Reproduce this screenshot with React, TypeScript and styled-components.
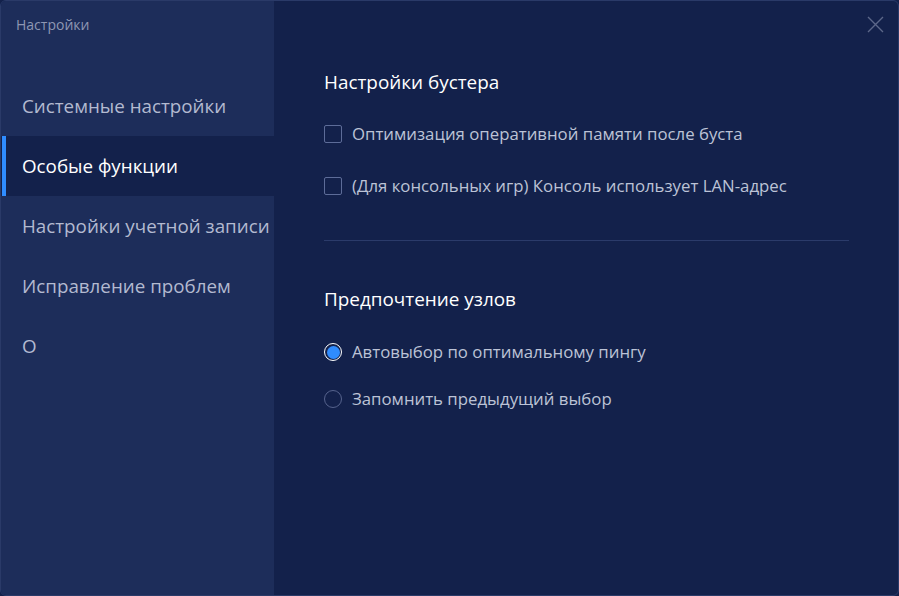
import React, { useState } from 'react';
import styled, { createGlobalStyle } from 'styled-components';

const GlobalStyle = createGlobalStyle`
	html, body {
		margin: 0;
		padding: 0;
		background: #13214b;
	}
	body {
		font-family: "Open Sans", "Noto Sans", sans-serif;
	}
`;

const Window = styled.div`
	width: 899px;
	height: 596px;
	box-sizing: border-box;
	display: flex;
	background: #13214b;
	border: 1px solid #2a3a68;
	border-radius: 6px;
	overflow: hidden;
	position: relative;
`;

const Sidebar = styled.aside`
	width: 273px;
	flex-shrink: 0;
	background: #1d2d5a;
	display: flex;
	flex-direction: column;
`;

const WindowTitle = styled.div`
	font-size: 14px;
	color: #8e97b3;
	padding: 14px 0 0 15px;
	height: 75px;
	box-sizing: border-box;
`;

const NavItem = styled.div<{ active?: boolean }>`
	height: 60px;
	display: flex;
	align-items: center;
	padding-left: 21px;
	font-size: 18.8px;
	white-space: nowrap;
	color: ${({ active }) => active ? '#ffffff' : '#b3bad0'};
	background: ${({ active }) => active ? '#13214b' : 'transparent'};
	position: relative;
	cursor: pointer;

	&::before {
		content: "";
		display: ${({ active }) => active ? 'block' : 'none'};
		position: absolute;
		left: 1px;
		top: 0;
		bottom: 0;
		width: 4px;
		background: #2f8cff;
	}
`;

const Content = styled.main`
	flex: 1;
	padding: 66px 50px 0 50px;
	display: flex;
	flex-direction: column;
`;

const SectionTitle = styled.h2`
	margin: 0;
	font-size: 18.9px;
	font-weight: 400;
	color: #ffffff;
	line-height: 30px;
`;

const OptionList = styled.div<{ gap: number; top: number }>`
	display: flex;
	flex-direction: column;
	gap: ${({ gap }) => gap}px;
	margin-top: ${({ top }) => top}px;
`;

const Option = styled.label`
	display: flex;
	align-items: center;
	gap: 10px;
	font-size: 16.8px;
	color: #bcc3d6;
	line-height: 24px;
	white-space: nowrap;
	cursor: pointer;
`;

const CheckBox = styled.span<{ checked?: boolean }>`
	width: 16px;
	height: 16px;
	border: 1.5px solid #5d6c98;
	border-radius: 2px;
	flex-shrink: 0;
	background: ${({ checked }) => checked ? '#2f8cff' : 'transparent'};
`;

const Radio = styled.span<{ checked?: boolean }>`
	width: 16px;
	height: 16px;
	border-radius: 50%;
	flex-shrink: 0;
	border: 1.5px solid ${({ checked }) => checked ? '#ffffff' : '#56638d'};
	position: relative;

	&::after {
		content: "";
		display: ${({ checked }) => checked ? 'block' : 'none'};
		position: absolute;
		inset: 1.5px;
		border-radius: 50%;
		background: #2f8cff;
	}
`;

const Divider = styled.hr`
	border: none;
	height: 1px;
	background: #2b3b6a;
	margin: 42px 0 0 0;
	width: 525px;
`;

const SecondSection = styled.section`
	margin-top: 43px;
`;

const CloseButton = styled.button`
	position: absolute;
	top: 13px;
	right: 13px;
	width: 20px;
	height: 20px;
	padding: 0;
	border: none;
	background: transparent;
	cursor: pointer;
	display: flex;
	align-items: center;
	justify-content: center;
`;

const navItems = [
	'Системные настройки',
	'Особые функции',
	'Настройки учетной записи',
	'Исправление проблем',
	'О',
];

export default function App() {
	const [active, setActive] = useState(1);
	const [ram, setRam] = useState(false);
	const [lan, setLan] = useState(false);
	const [node, setNode] = useState(0);

	return (
		<>
			<GlobalStyle />
			<Window>
				<Sidebar>
					<WindowTitle>Настройки</WindowTitle>
					{navItems.map((item, i) => (
						<NavItem key={item} active={i === active} onClick={() => setActive(i)}>
							{item}
						</NavItem>
					))}
				</Sidebar>
				<Content>
					<section>
						<SectionTitle>Настройки бустера</SectionTitle>
						<OptionList gap={28} top={25}>
							<Option onClick={() => setRam(!ram)}>
								<CheckBox checked={ram} />
								Оптимизация оперативной памяти после буста
							</Option>
							<Option onClick={() => setLan(!lan)}>
								<CheckBox checked={lan} />
								(Для консольных игр) Консоль использует LAN-адрес
							</Option>
						</OptionList>
					</section>
					<Divider />
					<SecondSection>
						<SectionTitle>Предпочтение узлов</SectionTitle>
						<OptionList gap={23} top={26}>
							<Option onClick={() => setNode(0)}>
								<Radio checked={node === 0} />
								Автовыбор по оптимальному пингу
							</Option>
							<Option onClick={() => setNode(1)}>
								<Radio checked={node === 1} />
								Запомнить предыдущий выбор
							</Option>
						</OptionList>
					</SecondSection>
				</Content>
				<CloseButton aria-label="Закрыть">
					<svg width="17" height="17" viewBox="0 0 17 17">
						<path d="M1 1 L16 16 M16 1 L1 16" stroke="#5c6789" strokeWidth="1.4" />
					</svg>
				</CloseButton>
			</Window>
		</>
	);
}
